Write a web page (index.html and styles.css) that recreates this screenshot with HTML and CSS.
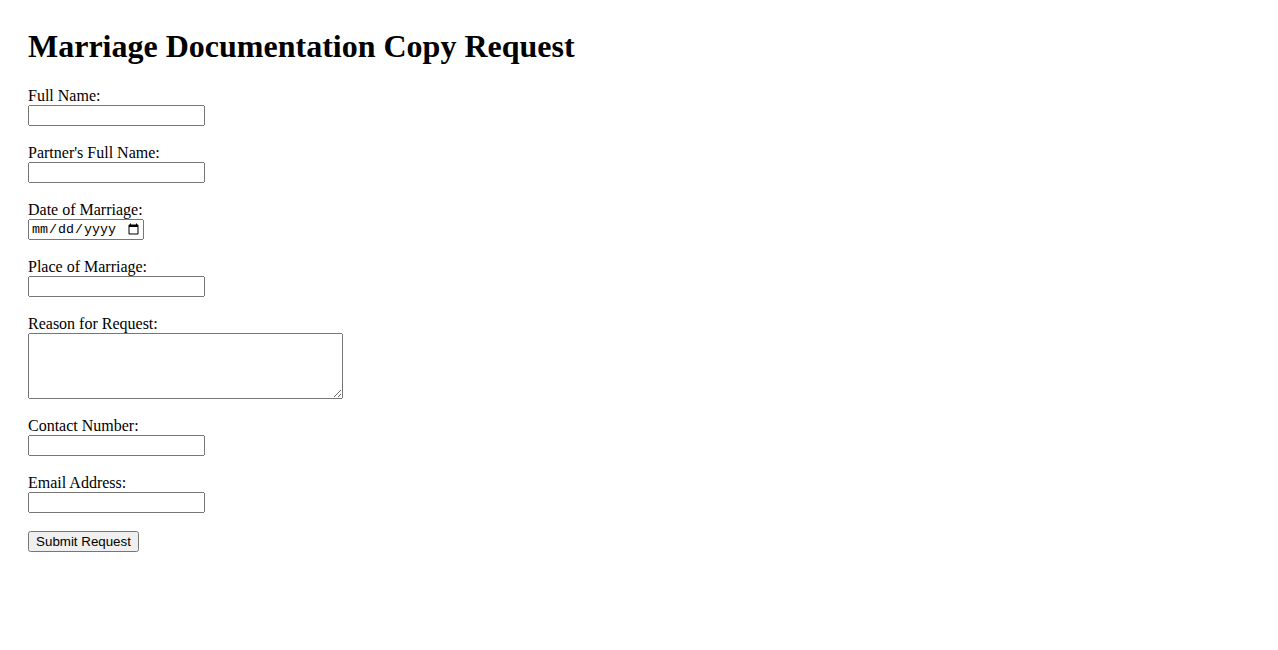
FILE: index.html
```html
<!DOCTYPE html>
<html lang="en">
<head>
    <meta charset="UTF-8">
    <meta name="viewport" content="width=device-width, initial-scale=1.0">
    <title>Marriage Documentation Copy Request</title>
    <link rel="stylesheet" href="styles.css">
</head>
<body>
    <h1>Marriage Documentation Copy Request</h1>
    <form id="requestForm">
        <div class="form-group">
            <label for="fullName">Full Name:</label>
            <input type="text" id="fullName" name="fullName">
        </div>
        <div class="form-group">
            <label for="partnerName">Partner's Full Name:</label>
            <input type="text" id="partnerName" name="partnerName">
        </div>
        <div class="form-group">
            <label for="marriageDate">Date of Marriage:</label>
            <input type="date" id="marriageDate" name="marriageDate">
        </div>
        <div class="form-group">
            <label for="marriagePlace">Place of Marriage:</label>
            <input type="text" id="marriagePlace" name="marriagePlace">
        </div>
        <div class="form-group">
            <label for="reason">Reason for Request:</label>
            <textarea id="reason" name="reason" rows="4" cols="40"></textarea>
        </div>
        <div class="form-group">
            <label for="contact">Contact Number:</label>
            <input type="tel" id="contact" name="contact">
        </div>
        <div class="form-group">
            <label for="email">Email Address:</label>
            <input type="email" id="email" name="email">
        </div>
        <button type="submit">Submit Request</button>
    </form>
</body>
</html>
```

FILE: styles.css
```css
body {
    margin: 0;
    padding: 28px;
    font-family: "Liberation Serif", "Times New Roman", serif;
    font-size: 16px;
    color: #000;
    background: #fff;
}

h1 {
    margin: 0 0 22px;
    font-size: 32px;
    font-weight: bold;
}

.form-group {
    margin-bottom: 18px;
}

label {
    display: block;
}

input,
textarea,
button {
    display: block;
    box-sizing: border-box;
    margin: 0;
    font-family: "Liberation Sans", Arial, sans-serif;
    font-size: 13.333px;
}

input {
    width: 177px;
    height: 21px;
}

input[type="date"] {
    width: 116px;
    font-family: "Liberation Mono", "Courier New", monospace;
}

textarea {
    width: 315px;
    height: 66px;
    font-family: "Liberation Mono", "Courier New", monospace;
}

button {
    margin-top: 18px;
    width: 111px;
    height: 21px;
}
```
